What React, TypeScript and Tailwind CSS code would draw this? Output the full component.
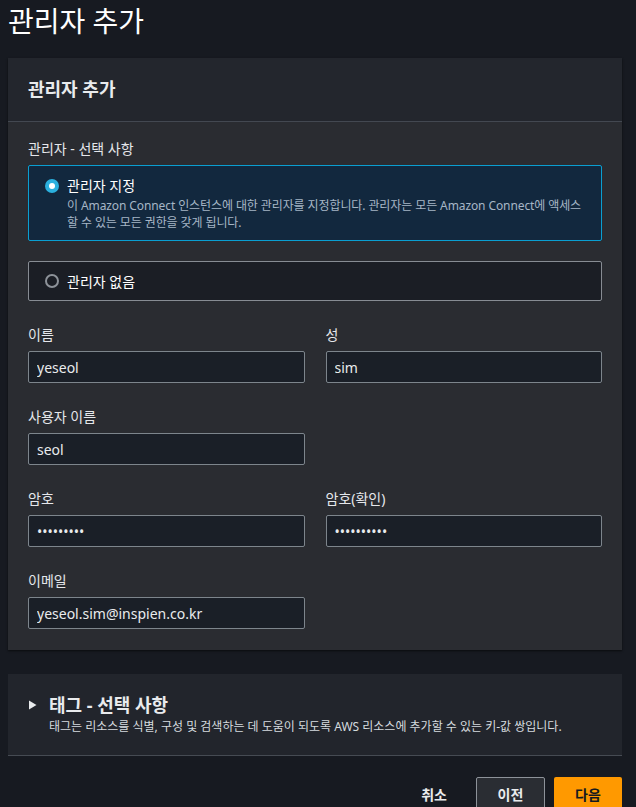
import { useState } from 'react';

const font = "font-['Noto_Sans','Noto_Sans_CJK_KR',sans-serif]";

function Field({ label, value, type = 'text' }: { label: string; value: string; type?: string }) {
  return (
    <div className="flex flex-col">
      <label className="mb-[6px] text-[14px] leading-[20px] text-[#e5e7eb]">{label}</label>
      <input
        readOnly
        type={type}
        value={value}
        className="h-[32px] rounded-[2px] border border-[#7d858c] bg-[#1a1f27] px-[8px] text-[14px] text-[#e9ebed] outline-none"
      />
    </div>
  );
}

export default function App() {
  const [admin, setAdmin] = useState<'assign' | 'none'>('assign');

  return (
    <div className={`min-h-[807px] bg-[#171a21] pb-4 ${font}`}>
      <h1 className="pl-[8px] pt-[2px] text-[28px] leading-[38px] text-white">관리자 추가</h1>

      <div className="ml-[8px] mt-[18px] w-[614px]">
        <section className="bg-[#2a2c31] shadow-[0_1px_2px_rgba(0,0,0,0.6)]">
          <header className="flex h-[64px] items-center border-b border-[#434851] bg-[#23262d] px-[20px]">
            <h2 className="text-[18px] font-bold text-[#e9ebed]">관리자 추가</h2>
          </header>

          <div className="px-[20px] pb-[21px] pt-[17px]">
            <div className="mb-[6px] text-[14px] leading-[20px] text-[#e5e7eb]">관리자 - 선택 사항</div>

            <button
              onClick={() => setAdmin('assign')}
              className={`flex w-full items-start gap-[8px] rounded-[2px] border pb-[9px] pl-[16px] pr-[6px] pt-[9px] text-left ${
                admin === 'assign' ? 'border-[#0a9fd1] bg-[#12283e]' : 'border-[#7d858c] bg-[#1a1f27]'
              }`}
            >
              <span
                className={`mt-[4px] flex h-[14px] w-[14px] shrink-0 items-center justify-center rounded-full ${
                  admin === 'assign' ? 'bg-[#2bb0de]' : 'border-2 border-[#8d9299]'
                }`}
              >
                {admin === 'assign' && <span className="h-[6px] w-[6px] rounded-full bg-white" />}
              </span>
              <span className="flex flex-col">
                <span className="text-[14px] leading-[22px] text-white">관리자 지정</span>
                <span className="break-keep text-[12px] leading-[17px] tracking-[-0.1px] text-[#a6b6c6]">
                  이 Amazon Connect 인스턴스에 대한 관리자를 지정합니다. 관리자는 모든 Amazon Connect에 액세스
                  할 수 있는 모든 권한을 갖게 됩니다.
                </span>
              </span>
            </button>

            <button
              onClick={() => setAdmin('none')}
              className={`mt-[20px] flex h-[40px] w-full items-center gap-[8px] rounded-[2px] border px-[16px] text-left ${
                admin === 'none' ? 'border-[#0a9fd1] bg-[#12283e]' : 'border-[#878c93] bg-[#1b1e25]'
              }`}
            >
              <span
                className={`flex h-[14px] w-[14px] shrink-0 items-center justify-center rounded-full ${
                  admin === 'none' ? 'bg-[#2bb0de]' : 'border-2 border-[#8d9299]'
                }`}
              >
                {admin === 'none' && <span className="h-[6px] w-[6px] rounded-full bg-white" />}
              </span>
              <span className="text-[14px] text-white">관리자 없음</span>
            </button>

            <div className="mt-[24px] grid grid-cols-2 gap-x-[21px] gap-y-[24px]">
              <Field label="이름" value="yeseol" />
              <Field label="성" value="sim" />
              <Field label="사용자 이름" value="seol" />
              <div />
              <Field label="암호" value="•••••••••" />
              <Field label="암호(확인)" value="••••••••••" />
              <Field label="이메일" value="yeseol.sim@inspien.co.kr" />
            </div>
          </div>
        </section>

        <section className="mt-[24px] border-b border-[#464b53] bg-[#22252c] px-[20px] pb-[19px] pt-[18px]">
          <div className="flex items-center gap-[11px]">
            <svg width="10" height="12" viewBox="0 0 10 12">
              <path d="M1 1.5 L8.5 6 L1 10.5 Z" fill="#e9ebed" />
            </svg>
            <h2 className="text-[18px] font-bold leading-[26px] text-[#e9ebed]">태그 - 선택 사항</h2>
          </div>
          <p className="pl-[21px] text-[12px] leading-[18px] text-[#d5dbdf]">
            태그는 리소스를 식별, 구성 및 검색하는 데 도움이 되도록 AWS 리소스에 추가할 수 있는 키-값 쌍입니다.
          </p>
        </section>

        <div className="mt-[21px] flex items-center justify-end gap-[9px]">
          <button className="mr-[20px] text-[14px] font-bold text-[#e9ebed]">취소</button>
          <button className="h-[34px] w-[69px] rounded-[2px] border border-[#8d9299] bg-[#2a2d33] text-[14px] font-bold text-[#e9ebed]">
            이전
          </button>
          <button className="h-[34px] w-[68px] rounded-[2px] bg-[#ff9900] text-[14px] font-bold text-[#16191f]">
            다음
          </button>
        </div>
      </div>
    </div>
  );
}
